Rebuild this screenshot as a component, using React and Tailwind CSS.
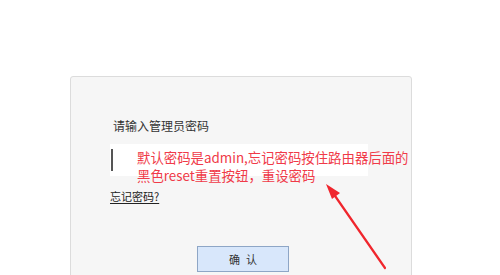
export default function App() {
  const font = { fontFamily: '"Noto Sans CJK SC", "Liberation Sans", sans-serif' };
  return (
    <div className="relative w-[500px] h-[275px] overflow-hidden bg-white" style={font}>
      <div className="ml-[70px] mt-[76px] w-[342px] h-[220px] rounded-[3px] border border-[#dcdcdc] bg-[#f6f6f6] pl-[39px] pt-[41px] flex flex-col">
        <div className="ml-[3px] text-[12px] leading-[16px] text-[#333]">请输入管理员密码</div>
        <div className="mt-[10px] w-[258px] h-[32px] bg-white flex items-center">
          <div className="ml-px w-[2px] h-[22px] bg-[#555]"></div>
        </div>
        <div className="mt-[13px] text-[11px] leading-[14px] text-[#222] underline underline-offset-2">忘记密码?</div>
        <div className="mt-[43px] ml-[87px] w-[92px] h-[26px] border border-[#8ea6c6] bg-[#d8e7fb] flex items-center justify-center text-[11px] text-[#333] tracking-[6px] pl-[6px]">确认</div>
      </div>
      <div className="absolute left-[137px] top-[148px] text-[13.4px] leading-[18px] text-[#f03a48] whitespace-nowrap" style={{ fontFamily: '"Noto Sans CJK SC", "Open Sans", sans-serif' }}>
        <div>默认密码是admin,忘记密码按住路由器后面的</div>
        <div>黑色reset重置按钮，重设密码</div>
      </div>
      <svg className="absolute left-0 top-0" width="500" height="275" viewBox="0 0 500 275">
        <line x1="385" y1="268" x2="333" y2="193" stroke="#f0262d" strokeWidth="2.2" strokeLinecap="round" />
        <polygon points="326,184 340,193 332,199" fill="#f0262d" />
      </svg>
    </div>
  );
}
